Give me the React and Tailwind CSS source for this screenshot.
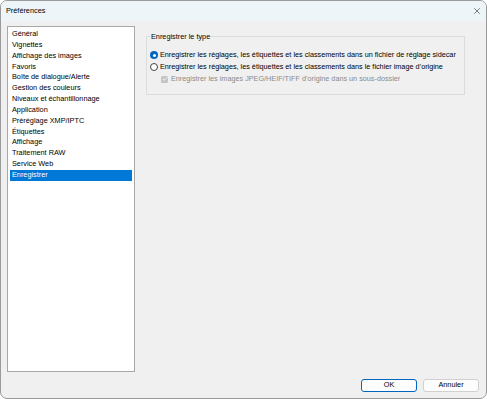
import { X, Check } from 'lucide-react';

const items = [
  'Général',
  'Vignettes',
  'Affichage des images',
  'Favoris',
  'Boîte de dialogue/Alerte',
  'Gestion des couleurs',
  'Niveaux et échantillonnage',
  'Application',
  'Préréglage XMP/IPTC',
  'Étiquettes',
  'Affichage',
  'Traitement RAW',
  'Service Web',
  'Enregistrer',
];

export default function App() {
  return (
    <div
      className="w-[487px] h-[399px] flex flex-col bg-[#f0f0f0] border border-[#9a9a9a] rounded-[7px] overflow-hidden text-black"
      style={{ fontFamily: '"Liberation Sans", Arial, sans-serif' }}
    >
      {/* Title bar */}
      <div className="h-[20px] shrink-0 bg-[#eef5f9] flex items-center justify-between pl-[5px] pr-[4px]">
        <span className="text-[7.3px]">Préférences</span>
        <X className="w-[10px] h-[10px] text-[#333]" strokeWidth={1.5} />
      </div>

      <div className="flex-1 flex pt-[5px] pl-[6px] pr-[21px]">
        {/* Category list */}
        <div className="w-[128px] h-[346px] shrink-0 bg-white border border-[#a8a8a8] pt-[2px] px-[2px]">
          {items.map((it) => (
            <div
              key={it}
              className={
                'h-[10.85px] leading-[10.85px] text-[7.3px] pl-[2px] whitespace-nowrap ' +
                (it === 'Enregistrer' ? 'bg-[#0078d7] text-white' : '')
              }
            >
              {it}
            </div>
          ))}
        </div>

        {/* Settings panel */}
        <div className="flex-1 pl-[11px] pt-[6px]">
          <div className="relative border border-[#dcdcdc] h-[59px] mt-[4px] pl-[3px] pt-[12px] text-[7.25px] whitespace-nowrap">
            <span className="absolute left-[3px] -top-[5px] bg-[#f0f0f0] px-[1px] text-[7.3px] leading-[9px]">
              Enregistrer le type
            </span>
            <div className="flex items-center h-[12px]">
              <span className="w-[8px] h-[8px] rounded-full bg-[#0067c0] flex items-center justify-center mr-[2px]">
                <span className="w-[3px] h-[3px] rounded-full bg-white" />
              </span>
              Enregistrer les réglages, les étiquettes et les classements dans un fichier de réglage sidecar
            </div>
            <div className="flex items-center h-[12px]">
              <span className="w-[8px] h-[8px] rounded-full border border-[#444] bg-white mr-[2px]" />
              Enregistrer les réglages, les étiquettes et les classements dans le fichier image d’origine
            </div>
            <div className="flex items-center h-[12px] text-[#8a8a8a] pl-[11px]">
              <span className="w-[7px] h-[7px] rounded-[1.5px] bg-[#c4c4c4] flex items-center justify-center mr-[3px]">
                <Check className="w-[6px] h-[6px] text-white" strokeWidth={3} />
              </span>
              Enregistrer les images JPEG/HEIF/TIFF d’origine dans un sous-dossier
            </div>
          </div>
        </div>
      </div>

      {/* Buttons */}
      <div className="flex justify-end gap-[6px] pr-[7px] pb-[6px] text-[7.3px]">
        <button className="w-[56px] h-[13px] rounded-[3px] bg-[#fdfdfd] border border-[#0067c0] flex items-center justify-center">
          OK
        </button>
        <button className="w-[56px] h-[13px] rounded-[3px] bg-[#fdfdfd] border border-[#d0d0d0] flex items-center justify-center">
          Annuler
        </button>
      </div>
    </div>
  );
}
